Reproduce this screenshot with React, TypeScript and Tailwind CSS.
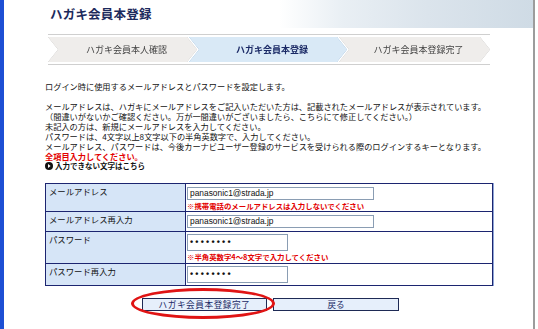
import React from 'react';

const jp = "font-['Noto_Sans_CJK_JP','Noto_Sans',sans-serif]";
const chevron =
  '[clip-path:polygon(0_0,calc(100%_-_10px)_0,100%_50%,calc(100%_-_10px)_100%,0_100%,10px_50%)]';

function Step({ label, active, width }: { label: string; active?: boolean; width: string }) {
  return (
    <div
      className={`${width} h-[25px] ${active ? '[filter:drop-shadow(0_0_0.6px_#7fa9cf)]' : '[filter:drop-shadow(0_0_0.6px_#b5b5b5)]'} -ml-[8px] first:ml-0`}
    >
      <div
        className={`${chevron} h-full flex items-center justify-center pl-[8px] ${
          active ? 'bg-[#d9e9f6] text-[#1b2a66] font-bold' : 'bg-[#efedeb] text-[#444]'
        } text-[9px]`}
      >
        {label}
      </div>
    </div>
  );
}

function Field({ value, w, password }: { value: string; w: string; password?: boolean }) {
  return (
    <div
      className={`${w} ${password ? 'h-[17px]' : 'h-[13px]'} border border-[#8a9db3] bg-white flex items-center pl-[2px] leading-none ${
        password
          ? "font-['Liberation_Sans',sans-serif] font-bold text-[9px] tracking-[2.2px] text-[#111]"
          : "font-['Liberation_Sans',sans-serif] text-[8.4px] text-[#111]"
      }`}
    >
      {value}
    </div>
  );
}

function Row({
  label,
  h,
  children,
  last,
}: {
  label: string;
  h: string;
  children: React.ReactNode;
  last?: boolean;
}) {
  return (
    <div className={`flex ${h} ${last ? '' : 'border-b border-[#1c2570]'}`}>
      <div className="w-[140px] bg-[#d6e5f7] border-r border-[#1c2570] pl-[3px] pt-[2px] text-[8.4px] leading-[10px] text-[#111]">
        {label}
      </div>
      <div className="flex-1 pl-[1px] pt-[3px] flex flex-col">{children}</div>
    </div>
  );
}

export default function App() {
  const pw = '••••••••';
  return (
    <div className={`${jp} w-[538px] h-[329px] bg-white flex overflow-hidden`}>
      <div className="w-[4px] bg-[#1d4fd4]" />
      <div className="flex-1 flex flex-col">
        {/* Header */}
        <div className="h-[28px] pl-[46px] flex items-center bg-[linear-gradient(to_right,#ffffff_52%,#e9eff4_64%,#dbe4ec_80%,#cfdbe5_100%)]">
          <span className="text-[12.5px] font-bold text-[#1c2a5c] tracking-[0.2px]">ハガキ会員本登録</span>
        </div>

        {/* Steps */}
        <div className="ml-[44px] mt-[6px] w-[442px] h-[31px] border-y border-[#cfcfcf] flex items-center">
          <Step label="ハガキ会員本人確認" width="w-[149px]" />
          <Step label="ハガキ会員本登録" width="w-[158px]" active />
          <Step label="ハガキ会員本登録完了" width="w-[151px]" />
        </div>

        {/* Description */}
        <div className="ml-[41px] mt-[16px] text-[8.2px] leading-[10px] text-[#111]">
          <p>ログイン時に使用するメールアドレスとパスワードを設定します。</p>
          <div className="h-[10px]" />
          <p>メールアドレスは、ハガキにメールアドレスをご記入いただいた方は、記載されたメールアドレスが表示されています。</p>
          <p>（間違いがないかご確認ください。万が一間違いがございましたら、こちらにて修正してください。）</p>
          <p>未記入の方は、新規にメールアドレスを入力してください。</p>
          <p>パスワードは、4文字以上8文字以下の半角英数字で、入力してください。</p>
          <p>メールアドレス、パスワードは、今後カーナビユーザー登録のサービスを受けられる際のログインするキーとなります。</p>
          <p className="font-bold text-[#e30000]">全項目入力してください。</p>
          <p className="flex items-center gap-[2px] font-bold text-[7.5px]">
            <svg width="8" height="8" viewBox="0 0 8 8">
              <circle cx="4" cy="4" r="4" fill="#111" />
              <path d="M3 2 L5.6 4 L3 6 Z" fill="#fff" />
            </svg>
            入力できない文字はこちら
          </p>
        </div>

        {/* Form table */}
        <div className="ml-[41px] mt-[12px] w-[448px] border border-[#1c2570] shadow-[1px_0_0_#8fa6d8]">
          <Row label="メールアドレス" h="h-[28px]">
            <Field value="panasonic1@strada.jp" w="w-[187px]" />
            <span className="mt-[1px] text-[7.4px] leading-[9px] font-bold text-[#e30000]">
              ※携帯電話のメールアドレスは入力しないでください
            </span>
          </Row>
          <Row label="メールアドレス再入力" h="h-[20px]">
            <Field value="panasonic1@strada.jp" w="w-[187px]" />
          </Row>
          <Row label="パスワード" h="h-[32px]">
            <div className="-mt-[1px]">
              <Field value={pw} w="w-[101px]" password />
            </div>
            <span className="mt-[1px] text-[7.4px] leading-[9px] font-bold text-[#e30000]">
              ※半角英数字4〜8文字で入力してください
            </span>
          </Row>
          <Row label="パスワード再入力" h="h-[21px]" last>
            <div className="-mt-[1px]">
              <Field value={pw} w="w-[101px]" password />
            </div>
          </Row>
        </div>

        {/* Buttons */}
        <div className="ml-[138px] mt-[12px] flex items-start gap-[6px] leading-none">
          <div className="relative flex">
            <button className="block w-[125px] h-[13px] bg-[#e6effb] border border-[#1e2a55] text-[8.6px] leading-[11px] tracking-[0.6px] text-[#1b2a66]">
              ハガキ会員本登録完了
            </button>
            <div className="absolute left-[-11px] top-[-10px] w-[144px] h-[31px] rounded-[50%] border-[3px] border-[#e01414] pointer-events-none" />
          </div>
          <button className="block w-[126px] h-[13px] bg-[#e6effb] border border-[#1e2a55] text-[8.6px] leading-[11px] text-[#1b2a66]">
            戻る
          </button>
        </div>
      </div>
      <div className="w-[2px] bg-[#9c9c9c]" />
      <div className="w-[3px] bg-white" />
    </div>
  );
}
